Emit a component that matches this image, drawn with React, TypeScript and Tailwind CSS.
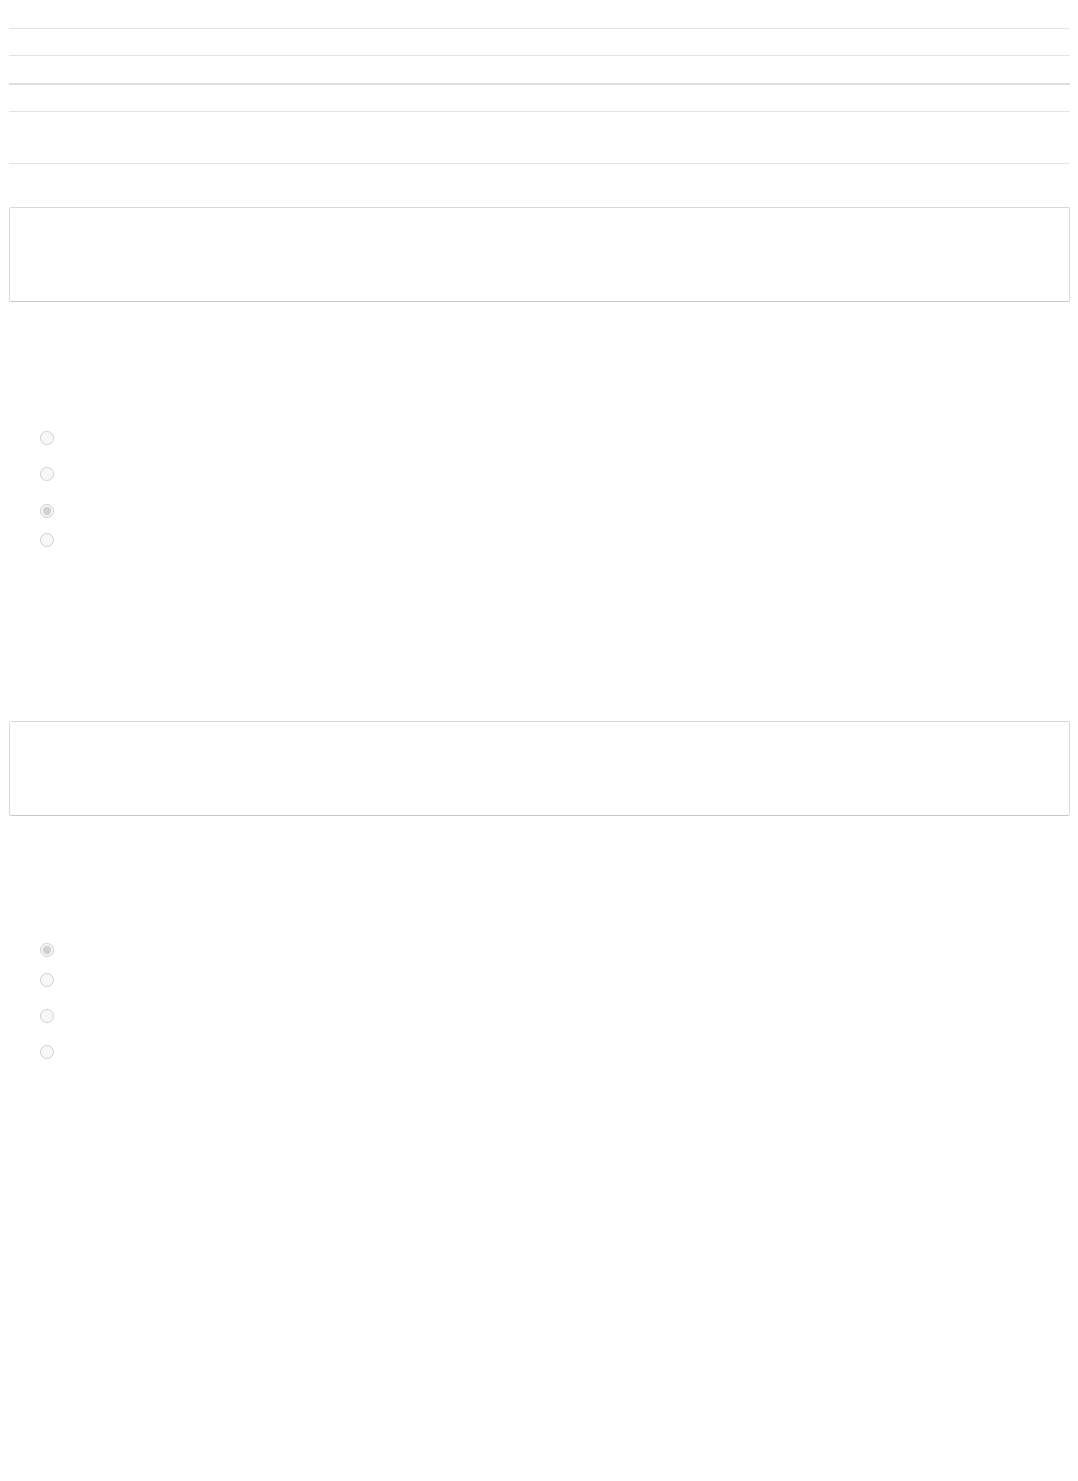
import React from 'react'

const firstOptions = [
  { id: 'q1-a', gap: 'mt-0', checked: false },
  { id: 'q1-b', gap: 'mt-[22px]', checked: false },
  { id: 'q1-c', gap: 'mt-[23px]', checked: true },
  { id: 'q1-d', gap: 'mt-[15px]', checked: false },
]

const secondOptions = [
  { id: 'q2-a', gap: 'mt-0', checked: true },
  { id: 'q2-b', gap: 'mt-[16px]', checked: false },
  { id: 'q2-c', gap: 'mt-[22px]', checked: false },
  { id: 'q2-d', gap: 'mt-[22px]', checked: false },
]

function AnswerBox() {
  return (
    <div className="h-[95px] w-full rounded-[2px] border border-[#d7dadd] border-b-[#c4c9ce] bg-white" />
  )
}

function OptionList({ name, options }: { name: string; options: typeof firstOptions }) {
  return (
    <ul className="flex flex-col pl-[31px]">
      {options.map((opt) => (
        <li key={opt.id} className={`flex h-[14px] items-center ${opt.gap}`}>
          <input
            type="radio"
            name={name}
            disabled
            defaultChecked={opt.checked}
            className="m-0 h-[14px] w-[14px]"
          />
        </li>
      ))}
    </ul>
  )
}

export default function App() {
  return (
    <div
      className="min-h-[1481px] bg-white pl-[9px] pr-[8px] text-white"
      style={{ fontFamily: '"Liberation Sans", Arial, sans-serif' }}
    >
      {/* Header rows */}
      <div className="flex flex-col">
        <div className="h-[29px] border-b border-[#e3e3e3]" />
        <div className="h-[27px] border-b border-[#e3e3e3]" />
        <div className="h-[29px] border-b-2 border-[#dcdfe2]" />
        <div className="h-[27px] border-b border-[#e3e3e3]" />
        <div className="h-[52px] border-b border-[#e3e3e3]" />
      </div>

      {/* Question 1 */}
      <div className="mt-[43px]">
        <AnswerBox />
      </div>
      <div className="mt-[129px]">
        <OptionList name="q1" options={firstOptions} />
      </div>

      {/* Question 2 */}
      <div className="mt-[174px]">
        <AnswerBox />
      </div>
      <div className="mt-[127px]">
        <OptionList name="q2" options={secondOptions} />
      </div>
    </div>
  )
}
